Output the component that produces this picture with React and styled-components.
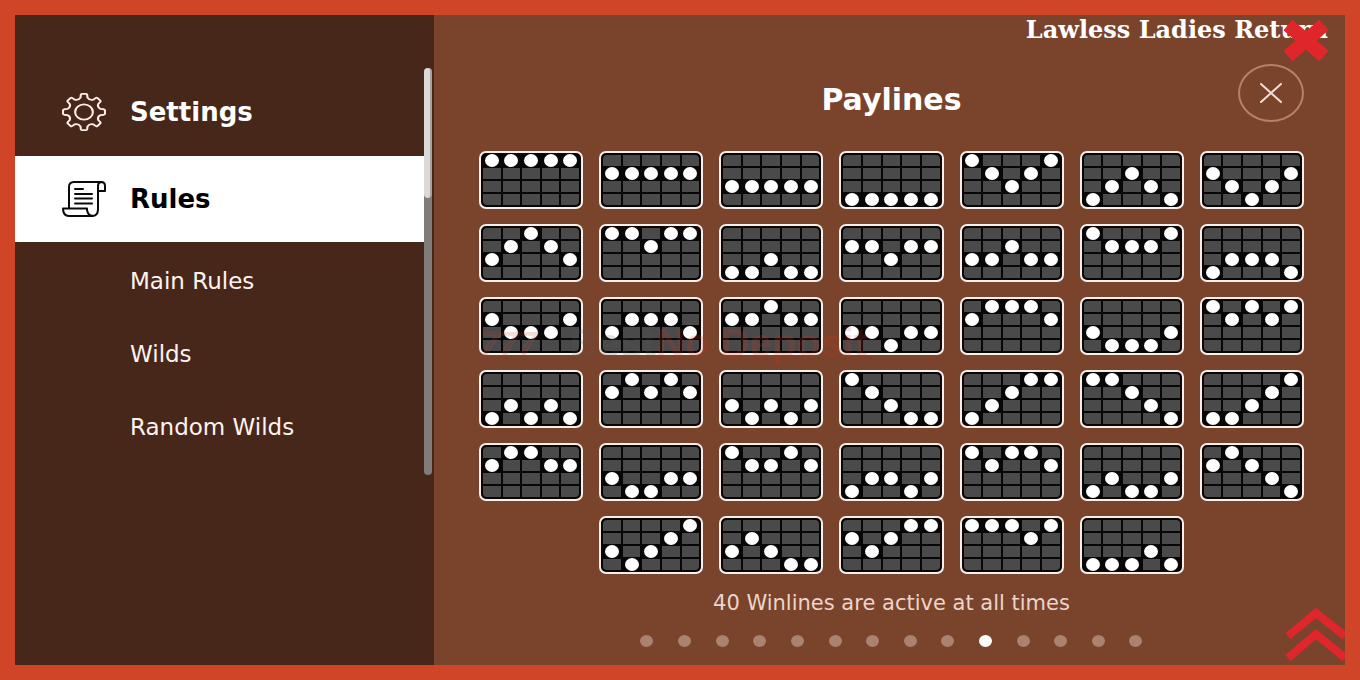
import React from 'react'
import styled, { createGlobalStyle } from 'styled-components'

const GlobalStyle = createGlobalStyle`
    *{
        box-sizing: border-box;
    }
    body{
        margin: 0;
        background: #d04427;
        font-family: 'DejaVu Sans', sans-serif;
    }
    button{
        border: none;
        background: none;
        padding: 0;
        font: inherit;
        color: inherit;
        cursor: pointer;
    }
`
const Frame = styled.div`
    min-height: 100vh;
    display: flex;
    border: 15px solid #d04427;
    background: #7a432c;
    position: relative;
`
const Sidebar = styled.aside`
    width: 31.5%;
    flex-shrink: 0;
    padding: 53px 2px 0 0;
    background: #48271b;
`
const ScrollArea = styled.div`
    display: flex;
    min-height: 407px;
`
const Menu = styled.nav`
    flex: 1;
    display: flex;
    flex-direction: column;
`
const MenuButton = styled.button`
    display: flex;
    align-items: center;
    gap: 24px;
    height: ${({ $active }) => ($active ? '86px' : '88px')};
    padding-left: 47px;
    background: ${({ $active }) => ($active ? '#fff' : 'transparent')};
    color: ${({ $active }) => ($active ? '#000' : '#fff')};
    font-size: 26px;
    font-weight: 700;
    svg{
        width: 44px;
        height: 38px;
    }
`
const SubLinks = styled.div`
    display: flex;
    flex-direction: column;
    padding: 3px 0 0 115px;
`
const SubLink = styled.a`
    color: #fdf3ee;
    font-size: 23px;
    line-height: 73px;
    text-decoration: none;
`
const ScrollTrack = styled.div`
    width: 8px;
    border-radius: 4px;
    background: #7f7c79;
`
const ScrollThumb = styled.div`
    width: 100%;
    height: 32%;
    border-radius: 4px;
    background: #dcdad9;
    border-right: 2px solid #a5a2a0;
`
const Main = styled.main`
    flex: 1;
    min-width: 0;
    display: flex;
    flex-direction: column;
    padding: 0 41px 18px 45px;
`
const GameTitle = styled.div`
    align-self: flex-end;
    margin-right: -24px;
    color: #fff;
    font-family: 'DejaVu Serif', serif;
    font-size: 24px;
    font-weight: 700;
    line-height: 30px;
    white-space: nowrap;
`
const Header = styled.header`
    display: grid;
    grid-template-columns: 66px 1fr 66px;
    align-items: end;
    margin: 19px 0 29px;
    h1{
        grid-column: 2;
        margin: 0;
        color: #fff;
        font-size: 30px;
        line-height: 44px;
        text-align: center;
    }
`
const CloseButton = styled.button`
    height: 58px;
    display: grid;
    place-items: center;
    border: 2px solid #b5806c;
    border-radius: 50%;
    svg{
        width: 22px;
        height: 20px;
    }
`
const PaylineGrid = styled.div`
    display: grid;
    grid-template-columns: repeat(7, 1fr);
    gap: 15px 16px;
    & > :nth-child(36){
        grid-column-start: 2;
    }
`
const Card = styled.div`
    aspect-ratio: 104 / 58;
    display: grid;
    grid-template-columns: repeat(5, 1fr);
    grid-template-rows: repeat(4, minmax(0, 1fr));
    gap: 2px;
    padding: 2px;
    border: 2px solid #f8efea;
    border-radius: 7px;
    background: #070707;
    & > :nth-child(1){
        border-top-left-radius: 4px;
    }
    & > :nth-child(5){
        border-top-right-radius: 4px;
    }
    & > :nth-child(16){
        border-bottom-left-radius: 4px;
    }
    & > :nth-child(20){
        border-bottom-right-radius: 4px;
    }
`
const Cell = styled.div`
    display: grid;
    place-items: center;
    place-content: center;
    background: ${({ $hit }) => ($hit ? '#070707' : '#4a4a4a')};
`
const Spot = styled.span`
    width: 14px;
    height: 13px;
    border-radius: 50%;
    background: #fff;
`
const Caption = styled.p`
    margin: 14px 0 17px;
    color: #ecd5ca;
    font-size: 21px;
    line-height: 30px;
    text-align: center;
`
const Pager = styled.div`
    width: 100%;
    max-width: 502px;
    display: flex;
    justify-content: space-between;
    align-self: center;
`
const PageDot = styled.button`
    width: 13px;
    height: 12px;
    border-radius: 50%;
    background: ${({ $active }) => ($active ? '#fff' : '#a98270')};
`
const CloseBadge = styled.button`
    position: absolute;
    top: 5px;
    right: 16px;
    width: 46px;
    height: 41px;
    svg{
        display: block;
    }
`
const TopButton = styled.a`
    position: absolute;
    right: 0;
    bottom: 4px;
    width: 60px;
    height: 55px;
    svg{
        display: block;
    }
`
const Watermark = styled.div`
    position: absolute;
    top: 308px;
    left: 35%;
    display: flex;
    align-items: center;
    gap: 32px;
    opacity: 0.17;
    color: #5d5a58;
    font-family: 'Liberation Sans', sans-serif;
    font-size: 40px;
    font-weight: 700;
    line-height: 40px;
    pointer-events: none;
    i{
        color: #c23a24;
        font-size: 34px;
        text-shadow: 0 0 1px #fff;
    }
    b{
        color: #e2301c;
        margin-left: -32px;
    }
`

// row of the spot in each of the five reels, counted from the top
const paylines = [
    '00000', '11111', '22222', '33333', '01210', '32123', '12321',
    '21012', '00100', '33233', '11211', '22122', '01110', '32223',
    '12221', '21112', '11011', '22322', '10001', '23332', '01010',
    '32323', '10101', '23232', '01233', '32100', '00123', '33210',
    '10011', '23322', '01101', '32232', '01001', '32332', '10123',
    '23210', '21233', '12100', '00010', '33323',
]

const pages = Array.from({ length: 14 }, (_, i) => i + 1)
const currentPage = 10

const point = (deg, r) => {
    const a = (deg * Math.PI) / 180
    return `${(24 + r * Math.cos(a)).toFixed(2)} ${(24 + r * Math.sin(a)).toFixed(2)}`
}

const gearPath = [0, 45, 90, 135, 180, 225, 270, 315]
    .map((a, i) => `${i ? 'L' : 'M'}${point(a - 12, 18.5)} L${point(a - 9, 22)} Q${point(a - 8, 23)} ${point(a - 5, 23)}
        L${point(a + 5, 23)} Q${point(a + 8, 23)} ${point(a + 9, 22)} L${point(a + 12, 18.5)}
        Q${point(a + 22.5, 15.5)} ${point(a + 33, 18.5)}`)
    .join(' ') + 'Z'

const GearIcon = () => (
    <svg viewBox="0 0 48 48" preserveAspectRatio="none" fill="none" stroke="#fdeee6" strokeWidth="2.3" strokeLinejoin="round">
        <path d={gearPath} />
        <circle cx="24" cy="24" r="9.7" />
    </svg>
)

const ScrollIcon = () => (
    <svg viewBox="0 0 44 38" fill="none" stroke="#0a0a0a" strokeWidth="2" strokeLinecap="round" strokeLinejoin="round">
        <path d="M7 28V7Q7 2 12 2H39Q43 2 43 6V11H36V6Q36 2 40 2" />
        <path d="M36 11V29Q36 36 30 36H7Q1 36 1 28.5H25V30Q26 36 31 36" />
        <path d="M13 9H21M13 14H30M13 18.5H30M13 23.5H30" />
    </svg>
)

function Payline({ line, number }) {
    return (
        <Card role="img" aria-label={`Payline ${number}`}>
            {[0, 1, 2, 3].map((row) => line.split('').map((spot, reel) => {
                const hit = Number(spot) === row
                return <Cell key={`${row}-${reel}`} $hit={hit}>{hit && <Spot />}</Cell>
            }))}
        </Card>
    )
}

function App() {
  return (
    <>
        <GlobalStyle />
        <Frame>
            <Sidebar>
                <ScrollArea>
                    <Menu>
                        <MenuButton type="button"><GearIcon />Settings</MenuButton>
                        <MenuButton type="button" $active><ScrollIcon />Rules</MenuButton>
                        <SubLinks>
                            <SubLink href="#main-rules">Main Rules</SubLink>
                            <SubLink href="#wilds">Wilds</SubLink>
                            <SubLink href="#random-wilds">Random Wilds</SubLink>
                        </SubLinks>
                    </Menu>
                    <ScrollTrack><ScrollThumb /></ScrollTrack>
                </ScrollArea>
            </Sidebar>

            <Main>
                <GameTitle>Lawless Ladies Return</GameTitle>
                <Header>
                    <h1>Paylines</h1>
                    <CloseButton type="button" aria-label="Close">
                        <svg viewBox="0 0 22 20" stroke="#f3ddd2" strokeWidth="2" strokeLinecap="round">
                            <path d="M1 1L21 19M21 1L1 19" />
                        </svg>
                    </CloseButton>
                </Header>

                <PaylineGrid>
                    {paylines.map((line, i) => <Payline key={line} line={line} number={i + 1} />)}
                </PaylineGrid>

                <Caption>40 Winlines are active at all times</Caption>
                <Pager>
                    {pages.map((page) => (
                        <PageDot key={page} type="button" aria-label={`Page ${page}`} $active={page === currentPage} />
                    ))}
                </Pager>
            </Main>

            <Watermark aria-hidden="true"><i>777</i><span>Best</span><b>No Deposit</b></Watermark>

            <CloseBadge type="button" aria-label="Close window">
                <svg viewBox="0 0 46 41" fill="none" stroke="#df272b" strokeWidth="14">
                    <path d="M5 5L41 36M41 5L5 36" />
                </svg>
            </CloseBadge>
            <TopButton href="#top" aria-label="Back to top">
                <svg viewBox="0 0 60 55" fill="none" stroke="#df272b" strokeWidth="8">
                    <path d="M3 30L31 7L60 30M3 52L31 28L60 52" />
                </svg>
            </TopButton>
        </Frame>
    </>
  )
}

export default App
